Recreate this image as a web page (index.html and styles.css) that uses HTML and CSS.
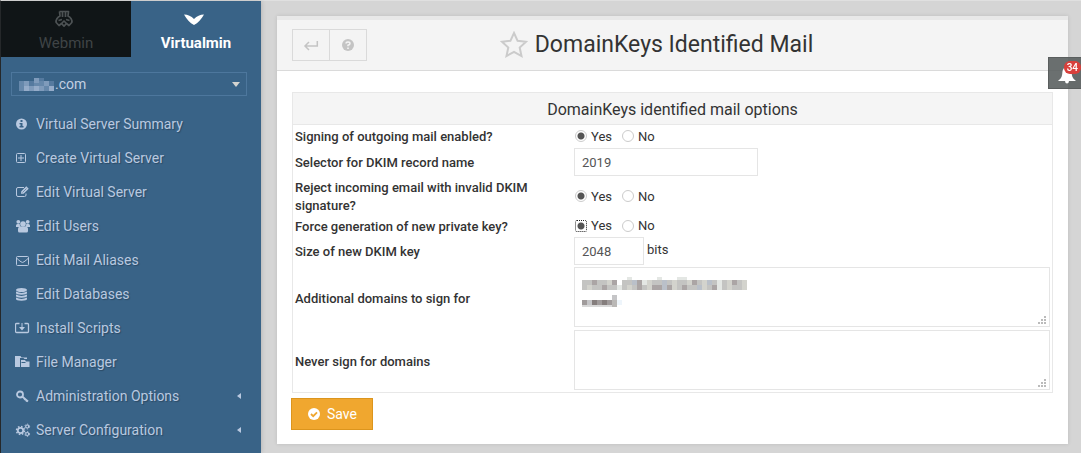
FILE: index.html
```html
<!DOCTYPE html>
<html lang="en">
<head>
<meta charset="utf-8">
<title>DomainKeys Identified Mail</title>
<link rel="stylesheet" href="styles.css">
</head>
<body>
<div class="app">
  <aside class="sidebar">
    <nav class="tabs" aria-label="Products">
      <a class="tab tab-off" href="#webmin">
        <svg class="tab-icon" viewBox="0 0 20 18" fill="none" stroke="#4d5254" stroke-width="1.700" stroke-linejoin="round"><path d="M5.500 1.500H14.500L14 6C16.500 7 18.500 10 17.800 12.500L15 15.500L12.500 13.500L10 16.200L7.500 13.500L5 15.500L2.200 12.500C1.500 10 3.500 7 6 6L5.500 1.500M8.500 2V7M11.500 2V7M4.500 10.500L8 9.500M15.500 10.500L12 9.500M7.500 13.500L10 11L12.500 13.500"/></svg>
        <span>Webmin</span>
      </a>
      <a class="tab tab-on" href="#virtualmin">
        <svg class="tab-icon" viewBox="0 0 20 18" fill="currentColor"><path d="M0 4.500C4 4.500 7 6 10 9C13 6 16 4.500 20 4.500C17.500 9 14 13 10 15C6 13 2.500 9 0 4.500Z"/></svg>
        <span>Virtualmin</span>
      </a>
    </nav>
    <div class="domain">
      <select class="domain-select" aria-label="Domain"><option>.com</option></select>
      <svg class="domain-mask" viewBox="0 0 35 15" shape-rendering="crispEdges"><path fill="#6688ab" d="M0 3h35v10H0z"/><path fill="#7f9bbb" d="M5 3h5v5H5zM15 0h5v5h-5zM25 3h5v5h-5zM10 8h5v5h-5zM20 8h5v5h-5z"/><path fill="#95acc9" d="M15 8h5v5h-5zM5 8h5v5H5zM30 8h5v5h-5z"/><path fill="#557a9f" d="M10 3h5v5h-5zM20 0h5v3h-5zM30 3h5v5h-5z"/></svg>
      <svg class="domain-arrow" viewBox="0 0 8 5"><path fill="#d4d4d0" d="M0 0h8L4 5z"/></svg>
    </div>
    <ul class="menu">
      <li><a href="#summary"><svg viewBox="0 0 16 16"><circle cx="6.500" cy="8" r="5.500" fill="currentColor"/><path fill="#396387" d="M5.500 4h2v2h-2zM4.500 7h3v3h1v1.500h-4V10h1V8.300h-1z"/></svg><span>Virtual Server Summary</span></a></li>
      <li><a href="#create"><svg viewBox="0 0 16 16" fill="none" stroke="currentColor"><rect x="1.500" y="3.500" width="9" height="9" rx="1"/><path d="M3 8h6M6 5v6"/></svg><span>Create Virtual Server</span></a></li>
      <li><a href="#edit"><svg viewBox="0 0 16 16" fill="none" stroke="currentColor"><path d="M9 3.500H3Q1.500 3.500 1.500 5v6q0 1.500 1.500 1.500h6.500q1.500 0 1.500-1.500V9.500"/><path d="M6 9.800L6.300 7.300L11.300 2.300L13.700 4.700L8.600 9.700Z" fill="currentColor" stroke="none"/><path d="M7.500 8.500L11.500 4.500" stroke="#396387" stroke-width=".6"/></svg><span>Edit Virtual Server</span></a></li>
      <li><a href="#users"><svg viewBox="0 0 16 16" fill="currentColor"><circle cx="3.300" cy="3.800" r="1.900"/><circle cx="12.700" cy="3.800" r="1.900"/><path d="M1 9V7.500Q1 6 2.500 6h2.200Q4.700 8 5.800 9zM15 9V7.500Q15 6 13.500 6h-2.200q0 2-1.100 3z"/><circle cx="8" cy="6" r="2.800"/><path d="M3 13V11q0-2.500 2.500-2.500h5Q13 8.500 13 11v2q0 1.500-1.500 1.500h-7Q3 14.500 3 13z"/></svg><span>Edit Users</span></a></li>
      <li><a href="#mail"><svg viewBox="0 0 16 16" fill="none" stroke="currentColor"><rect x="1.500" y="4.500" width="12" height="9" rx="1"/><path d="M1.500 6Q4 8.500 6 9.800Q7.500 11 9 9.800Q11 8.500 13.500 6"/></svg><span>Edit Mail Aliases</span></a></li>
      <li><a href="#databases"><svg viewBox="0 0 16 16" fill="currentColor"><ellipse cx="6.500" cy="4" rx="5.500" ry="2"/><path d="M1 5.600Q6.500 8.500 12 5.600V7Q12 8.500 6.500 8.800Q1 8.500 1 7zM1 8.600q5.500 2.600 11 0V10q0 1.500-5.500 1.800Q1 11.500 1 10zM1 11.600q5.500 2.600 11 0V13q0 1.500-5.500 1.800Q1 14.500 1 13z"/></svg><span>Edit Databases</span></a></li>
      <li><a href="#scripts"><svg viewBox="0 0 16 16" fill="none" stroke="currentColor"><path d="M4.500 3.500h-3Q.5 3.500.5 4.500v7q0 1 1 1h11q1 0 1-1v-7q0-1-1-1h-3" stroke-width="1.300"/><path d="M7 3v5"/><path d="M4 7h6l-3 3.500z" fill="currentColor" stroke="none"/></svg><span>Install Scripts</span></a></li>
      <li><a href="#files"><svg viewBox="0 0 16 16" fill="currentColor"><path d="M0 2h5.500l1 1.500H12V5H9.500L8.500 4H5v9H0z"/><path d="M6 6h4l1 1.500h3.500V13H6z"/><path d="M6.500 8.500h4" stroke="#396387"/></svg><span>File Manager</span></a></li>
      <li><a href="#admin"><svg viewBox="0 0 16 16" fill="none" stroke="currentColor" stroke-width="1.800"><circle cx="5" cy="6.500" r="3"/><path d="M7.200 8.500L13 13.500M9.300 12L10.700 10.500M11 13.500L12.500 11.800"/></svg><span>Administration Options</span><i class="caret"></i></a></li>
      <li><a href="#server"><svg viewBox="0 0 16 16" fill="none" stroke="currentColor"><circle cx="5.500" cy="8.500" r="2.700" stroke-width="1.800"/><circle cx="5.500" cy="8.500" r="4" stroke-width="1.500" stroke-dasharray="1.600 1.540"/><circle cx="12.200" cy="4.500" r="1.500" stroke-width="1.200"/><circle cx="12.200" cy="4.500" r="2.400" stroke-dasharray="1.200 1.310"/><circle cx="12.200" cy="12" r="1.500" stroke-width="1.200"/><circle cx="12.200" cy="12" r="2.400" stroke-dasharray="1.200 1.310"/></svg><span>Server Configuration</span><i class="caret"></i></a></li>
    </ul>
  </aside>

  <main class="main">
    <section class="card">
      <header class="card-head">
        <div class="tools">
          <button type="button" aria-label="Back"><svg viewBox="0 0 16 16" fill="none" stroke="currentColor" stroke-width="1.500"><path d="M14.300 4v5H2M6 5L2 9l4 4"/></svg></button>
          <button type="button" aria-label="Help"><svg viewBox="0 0 16 16"><circle cx="8" cy="8" r="6" fill="currentColor"/><path d="M6 6.600Q6 4.900 8 4.900T10 6.500Q10 7.500 8 8.300V9.300" fill="none" stroke="#f4f4f4" stroke-width="1.500"/><path d="M7.200 10.500h1.600V12H7.200z" fill="#f4f4f4"/></svg></button>
        </div>
        <h1><svg class="star" viewBox="0 0 28 28" fill="none" stroke="#cbcbcb" stroke-width="2"><path d="M14 2L17.600 9.800L26 10.700L19.700 16.500L21.500 25L14 20.800L6.500 25L8.300 16.500L2 10.700L10.400 9.800Z"/></svg><span>DomainKeys Identified Mail</span></h1>
      </header>
      <form class="card-body">
        <table class="options">
          <colgroup><col class="col-label"><col></colgroup>
          <thead><tr><th colspan="2">DomainKeys identified mail options</th></tr></thead>
          <tbody>
            <tr class="row-first"><th scope="row">Signing of outgoing mail enabled?</th><td><div class="radios"><label><input type="radio" name="sign" checked>Yes</label><label><input type="radio" name="sign">No</label></div></td></tr>
            <tr><th scope="row"><label for="selector">Selector for DKIM record name</label></th><td><div class="field"><input class="text wide" id="selector" type="text" value="2019"></div></td></tr>
            <tr><th scope="row">Reject incoming email with invalid DKIM signature?</th><td><div class="radios"><label><input type="radio" name="reject" checked>Yes</label><label><input type="radio" name="reject">No</label></div></td></tr>
            <tr><th scope="row">Force generation of new private key?</th><td><div class="radios"><label><input class="focused" type="radio" name="force" checked>Yes</label><label><input type="radio" name="force">No</label></div></td></tr>
            <tr><th scope="row"><label for="size">Size of new DKIM key</label></th><td><div class="field"><input class="text small" id="size" type="text" value="2048"><span>bits</span></div></td></tr>
            <tr><th scope="row"><label for="extra">Additional domains to sign for</label></th><td><div class="area"><textarea id="extra"></textarea>
              <svg class="area-mask" viewBox="0 0 170 32" shape-rendering="crispEdges">
                <path fill="#c4c4c2" d="M2 5h35v10H2zM42 5h125v10H42z"/>
                <path fill="#e4e7e4" d="M47 2h5v3h-5zM97 2h10v3H97zM77 2h5v3h-5zM37 10h5v5h-5zM137 5h5v10h-5zM62 5h5v5h-5z"/>
                <path fill="#aba5a5" d="M32 5h5v5h-5zM12 5h5v5h-5zM22 10h5v5h-5zM57 5h5v10h-5zM72 10h10v5H72zM87 10h5v5h-5zM102 10h5v5h-5zM112 5h5v5h-5zM132 10h5v5h-5zM152 5h5v5h-5z"/>
                <path fill="#d3d3cd" d="M7 10h5v5H7zM27 5h5v5h-5zM47 10h5v5h-5zM67 5h5v10h-5zM92 5h5v10h-5zM107 5h5v5h-5zM122 5h5v10h-5zM147 5h5v10h-5zM162 5h5v10h-5z"/>
                <path fill="#bac0c9" d="M52 5h5v5h-5zM82 5h5v10h-5zM117 10h5v5h-5zM127 5h5v5h-5z"/>
                <path fill="#d8d8d8" d="M2 29h30v3H2z"/><path fill="#a09b9b" d="M2 25h30v5H2z"/><path fill="#857e7d" d="M12 25h5v5h-5zM22 25h5v5h-5z"/><path fill="#c5c5c7" d="M32 20h5v5h-5zM7 25h5v5H7z"/><path fill="#bab8b6" d="M32 25h5v7h-5z"/><path fill="#eef5fb" d="M37 25h5v5h-5z"/>
              </svg>
              <svg class="grip" viewBox="0 0 8 8"><path d="M6 0h2v2H6zM3 3h2v2H3zM6 3h2v2H6zM0 6h2v2H0zM3 6h2v2H3zM6 6h2v2H6z"/></svg></div></td></tr>
            <tr><th scope="row"><label for="never">Never sign for domains</label></th><td><div class="area"><textarea id="never"></textarea>
              <svg class="grip" viewBox="0 0 8 8"><path d="M6 0h2v2H6zM3 3h2v2H3zM6 3h2v2H6zM0 6h2v2H0zM3 6h2v2H3zM6 6h2v2H6z"/></svg></div></td></tr>
          </tbody>
        </table>
        <button class="save" type="submit"><svg viewBox="0 0 14 14"><circle cx="7" cy="7" r="6" fill="#fff"/><path d="M4 7l2.200 2.200L10 5.400" fill="none" stroke="#f0a72f" stroke-width="1.800"/></svg>Save</button>
      </form>
    </section>
  </main>
</div>
<button class="alerts" type="button" aria-label="34 notifications">
  <svg viewBox="0 0 20 20" fill="#fff"><path d="M10 2C6.500 2 5.500 5 5.300 8C5 12 4 13.500 1 16H8Q8.200 18.500 10 18.500T12 16H19C16 13.500 15 12 14.700 8C14.500 5 13.500 2 10 2Z"/></svg>
  <span class="count">34</span>
</button>
</body>
</html>
```
FILE: styles.css
```css
* { box-sizing: border-box; }
body {
  margin: 0;
  background: #d5d5d5;
  color: #333;
  font: 13px/18px Roboto, "Liberation Sans", sans-serif;
}
button, input, select, textarea { font: inherit; color: inherit; margin: 0; }
.app {
  display: flex;
  min-height: 100vh;
  border-top: 1px solid #e0e0e0;
  border-left: 1px solid #292c2e;
}

/* Sidebar */
.sidebar {
  flex: 0 0 260px;
  height: calc(100vh - 1px);
  overflow: hidden;
  background: #396387;
  box-shadow: 0 0 5px rgba(0, 0, 0, .2);
}
.tabs { display: grid; grid-template-columns: 1fr 1fr; }
.tab {
  display: flex;
  flex-direction: column;
  align-items: center;
  gap: 6px;
  height: 56px;
  padding: 9px 4px 0 0;
  font-size: 15px;
  text-decoration: none;
}
.tab span { margin-right: -4px; }
.tab-icon { width: 20px; height: 18px; }
.tab-off { background: #101517; color: #3f4446; }
.tab-on { color: #fff; font-weight: 700; }
.domain { position: relative; margin: 15px 14px 0 10px; }
.domain-select {
  display: block;
  appearance: none;
  width: 100%;
  height: 24px;
  padding: 0 20px 0 43px;
  border: 1px solid #4d779d;
  border-radius: 0;
  background: transparent;
  color: #c3d0e2;
  font-size: 14px;
}
.domain-mask { position: absolute; left: 8px; top: 6px; width: 35px; height: 15px; }
.domain-arrow { position: absolute; right: 7px; top: 10px; width: 8px; height: 5px; }
.menu { list-style: none; margin: 11px 0 0; padding: 0; }
.menu a {
  display: flex;
  align-items: center;
  gap: 5px;
  height: 34px;
  padding: 0 20px 0 14px;
  color: #b9c9e0;
  font-size: 14px;
  text-decoration: none;
  text-shadow: 1px 1px 1px rgba(0, 0, 0, .25);
}
.menu svg { width: 16px; height: 16px; }
.caret {
  margin-left: auto;
  border: 3px solid transparent;
  border-left: 0;
  border-right: 4px solid #b9c9e0;
}

/* Page card */
.main { flex: 1; min-width: 0; padding: 15px 13px 9px 16px; }
.card {
  min-height: 100%;
  border-top: 4px solid #e8e8e8;
  background: #fff;
  box-shadow: 0 0 4px rgba(0, 0, 0, .12);
}
.card-head {
  display: grid;
  grid-template-columns: 75px 1fr 75px;
  align-items: center;
  height: 51px;
  padding: 0 15px;
  background: #f4f4f4;
  border-bottom: 1px solid #dadada;
}
.tools { display: flex; }
.tools button {
  display: flex;
  align-items: center;
  justify-content: center;
  width: 38px;
  height: 32px;
  padding: 0;
  border: 1px solid #dadada;
  background: transparent;
  color: #c4c4c4;
}
.tools button + button { margin-left: -1px; }
.tools svg { width: 16px; height: 16px; }
h1 {
  display: flex;
  align-items: center;
  justify-content: center;
  gap: 7px;
  margin: 0;
  padding-right: 32px;
  font-size: 23px;
  line-height: 32px;
  font-weight: 400;
}
.star { width: 28px; height: 28px; }
.card-body { padding: 21px 15px 13px; }

/* Options table */
.options {
  width: 100%;
  table-layout: fixed;
  border-collapse: separate;
  border-spacing: 0;
  border: 1px solid #e8e8e8;
}
.col-label { width: 279px; }
.options thead th {
  height: 32px;
  padding: 2px 0 0;
  border-bottom: 1px solid #e8e8e8;
  background: #f5f5f5;
  font-size: 16px;
  font-weight: 400;
  text-align: center;
}
.options tbody th {
  padding: 2px 2px 0;
  font-weight: 500;
  text-align: left;
  vertical-align: middle;
}
.options td { padding: 1px 2px; vertical-align: middle; }
.row-first { height: 22px; }
.radios { display: flex; gap: 9px; }
.radios label { display: flex; align-items: center; gap: 4px; line-height: 19px; }
.radios input {
  appearance: none;
  width: 12px;
  height: 12px;
  margin-left: 1px;
  border: 1px solid #ccc;
  border-radius: 50%;
  background: #fff;
}
.radios input:checked { background: radial-gradient(circle, #555 0 3px, #fff 4px); }
.radios .focused { border: 1px dotted #222; border-radius: 2px; }
.field { display: flex; gap: 3px; line-height: 26px; }
.text {
  height: 28px;
  padding: 0 7px;
  border: 1px solid #e5e5e5;
  background: #fff;
  color: #555;
}
.wide { width: 184px; }
.small { width: 70px; }
.area { position: relative; padding-bottom: 1px; }
textarea {
  display: block;
  width: 100%;
  height: 60px;
  padding: 7px;
  border: 1px solid #e5e5e5;
  background: #fff;
  resize: none;
}
.area-mask { position: absolute; left: 6px; top: 8px; width: 170px; height: 32px; }
.grip { position: absolute; right: 4px; bottom: 4px; width: 8px; height: 8px; fill: #bbb; }
.save {
  display: flex;
  align-items: center;
  justify-content: center;
  gap: 6px;
  width: 82px;
  height: 32px;
  margin: 5px 0 0 -1px;
  padding: 0;
  border: 1px solid #dc951d;
  background: #f0a72f;
  color: #fff;
  font-size: 14px;
}
.save svg { width: 14px; height: 14px; }

/* Notification tab */
.alerts {
  position: fixed;
  right: 0;
  top: 57px;
  width: 33px;
  height: 32px;
  padding: 0;
  border: 1px solid #5a5e5e;
  border-right: 0;
  background: rgba(86, 92, 92, .88);
}
.alerts svg { position: absolute; left: 8px; top: 7px; width: 20px; height: 20px; }
.count {
  position: absolute;
  right: 0;
  top: 3px;
  padding: 0 3px;
  border-radius: 6px;
  background: #d9403c;
  color: #fff;
  font-size: 10px;
  line-height: 13px;
  font-weight: 500;
}
```
